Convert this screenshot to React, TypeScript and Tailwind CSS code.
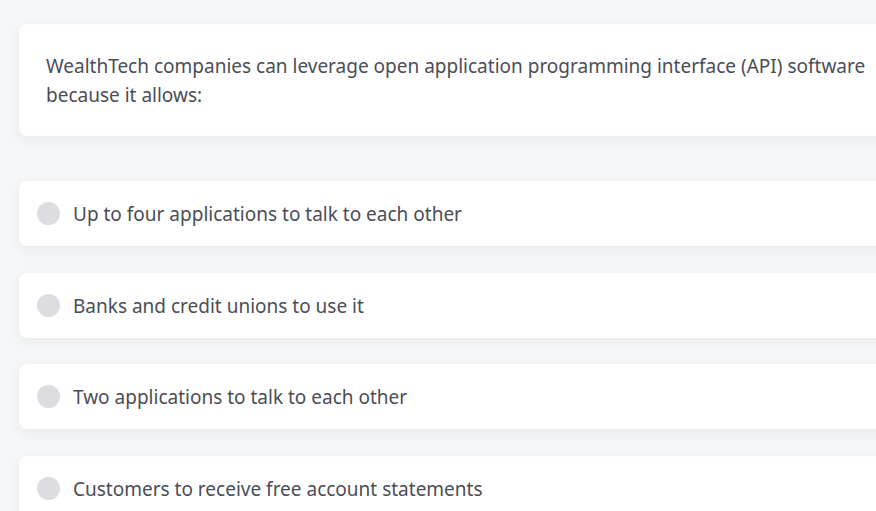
const OPTIONS = [
  'Up to four applications to talk to each other',
  'Banks and credit unions to use it',
  'Two applications to talk to each other',
  'Customers to receive free account statements',
];

export default function App() {
  return (
    <div
      className="h-[511px] w-[876px] overflow-hidden bg-[#f5f6f8] text-[#4b4d57]"
      style={{ fontFamily: '"Noto Sans", "Open Sans", sans-serif' }}
    >
      <div className="w-[900px] pl-[19px] pt-[24px]">
        <div className="rounded-lg bg-white px-[27px] pb-[26px] pt-[28px] text-[19px] leading-[29px] shadow-[0_4px_12px_rgba(0,0,0,0.05)]">
          WealthTech companies can leverage open application programming interface (API) software
          <br />
          because it allows:
        </div>

        <div className="mt-[45px] flex flex-col gap-[26.5px]">
          {OPTIONS.map((label) => (
            <div
              key={label}
              className="flex h-[65px] items-center gap-[13px] rounded-lg bg-white pl-[18px] shadow-[0_4px_12px_rgba(0,0,0,0.05)]"
            >
              <span className="h-[23px] w-[23px] shrink-0 rounded-full bg-[#dcdde0]" />
              <span className="pt-[2px] text-[19px] leading-[29px]">{label}</span>
            </div>
          ))}
        </div>
      </div>
    </div>
  );
}
